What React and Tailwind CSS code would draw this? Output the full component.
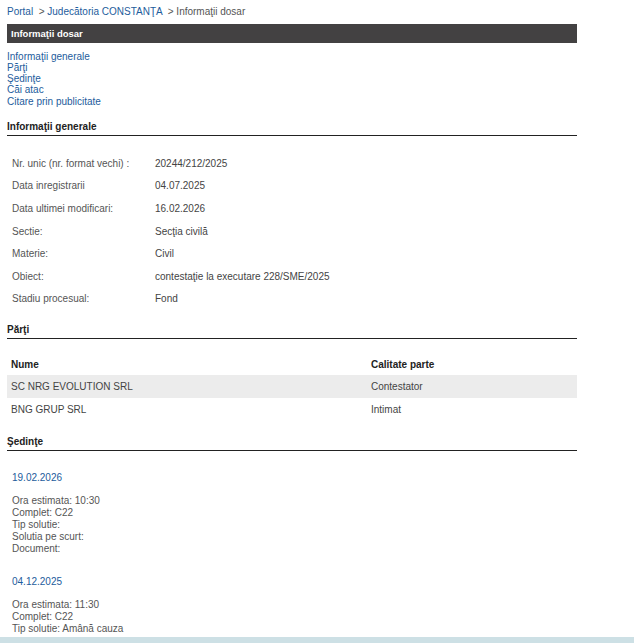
const info = [
  ['Nr. unic (nr. format vechi) :', '20244/212/2025'],
  ['Data inregistrarii', '04.07.2025'],
  ['Data ultimei modificari:', '16.02.2026'],
  ['Sectie:', 'Secţia civilă'],
  ['Materie:', 'Civil'],
  ['Obiect:', 'contestaţie la executare 228/SME/2025'],
  ['Stadiu procesual:', 'Fond'],
];

const parti = [
  ['SC NRG EVOLUTION SRL', 'Contestator'],
  ['BNG GRUP SRL', 'Intimat'],
];

const sedinte = [
  {
    data: '19.02.2026',
    rows: ['Ora estimata: 10:30', 'Complet: C22', 'Tip solutie:', 'Solutia pe scurt:', 'Document:'],
  },
  {
    data: '04.12.2025',
    rows: ['Ora estimata: 11:30', 'Complet: C22', 'Tip solutie: Amână cauza'],
  },
];

const SectionTitle = ({ children, className = '' }) => (
  <div className={`border-b border-[#222] text-[10px] font-bold leading-[13px] text-[#222] ${className}`}>
    {children}
  </div>
);

export default function App() {
  return (
    <div className="flex h-[643px] flex-col bg-white font-['Liberation_Sans',Arial,sans-serif]">
      <div className="flex-1 overflow-hidden">
        <div className="ml-[7px] w-[570px]">
          <div className="pt-[5px] text-[10px] leading-[13px] text-[#555]">
            <span className="text-[#1d5c9c]">Portal</span>
            <span> &nbsp;&gt; </span>
            <span className="text-[#1d5c9c]">Judecătoria CONSTANŢA</span>
            <span> &nbsp;&gt; Informaţii dosar</span>
          </div>

          <div className="mt-[6px] h-[19px] bg-[#434142] pl-[4px] text-[9.5px] font-bold leading-[19px] text-white">
            Informaţii dosar
          </div>

          <div className="mt-[8px] flex flex-col text-[10px] leading-[11px] text-[#1d5c9c]">
            <span>Informaţii generale</span>
            <span>Părţi</span>
            <span>Şedinţe</span>
            <span>Căi atac</span>
            <span className="mt-[1px]">Citare prin publicitate</span>
          </div>

          <SectionTitle className="mt-[13px] pb-[2px]">Informaţii generale</SectionTitle>

          <div className="mt-[16px] flex flex-col text-[10px] text-[#444]">
            {info.map(([k, v]) => (
              <div key={k} className="flex h-[22.6px] items-center">
                <span className="w-[148px] pl-[5px] text-[#555]">{k}</span>
                <span>{v}</span>
              </div>
            ))}
          </div>

          <SectionTitle className="mt-[13px] pb-[2px]">Părţi</SectionTitle>

          <div className="mt-[14px] text-[10px] text-[#444]">
            <div className="flex h-[22px] items-center font-bold text-[#222]">
              <span className="w-[364px] pl-[4px]">Nume</span>
              <span>Calitate parte</span>
            </div>
            {parti.map(([n, c], i) => (
              <div key={n} className={`flex h-[23px] items-center ${i === 0 ? 'bg-[#ececec]' : ''}`}>
                <span className="w-[364px] pl-[4px]">{n}</span>
                <span>{c}</span>
              </div>
            ))}
          </div>

          <SectionTitle className="mt-[14px] pb-[2px]">Şedinţe</SectionTitle>

          <div className="pl-[5px] text-[10px] text-[#555]">
            {sedinte.map((s) => (
              <div key={s.data} className="mt-[19px]">
                <div className="text-[#1d5c9c]">{s.data}</div>
                <div className="mt-[10px] flex flex-col leading-[12px]">
                  {s.rows.map((r) => (
                    <span key={r}>{r}</span>
                  ))}
                </div>
              </div>
            ))}
          </div>
        </div>
      </div>
      <div className="h-[6px] bg-[#cde0e5]" />
    </div>
  );
}
